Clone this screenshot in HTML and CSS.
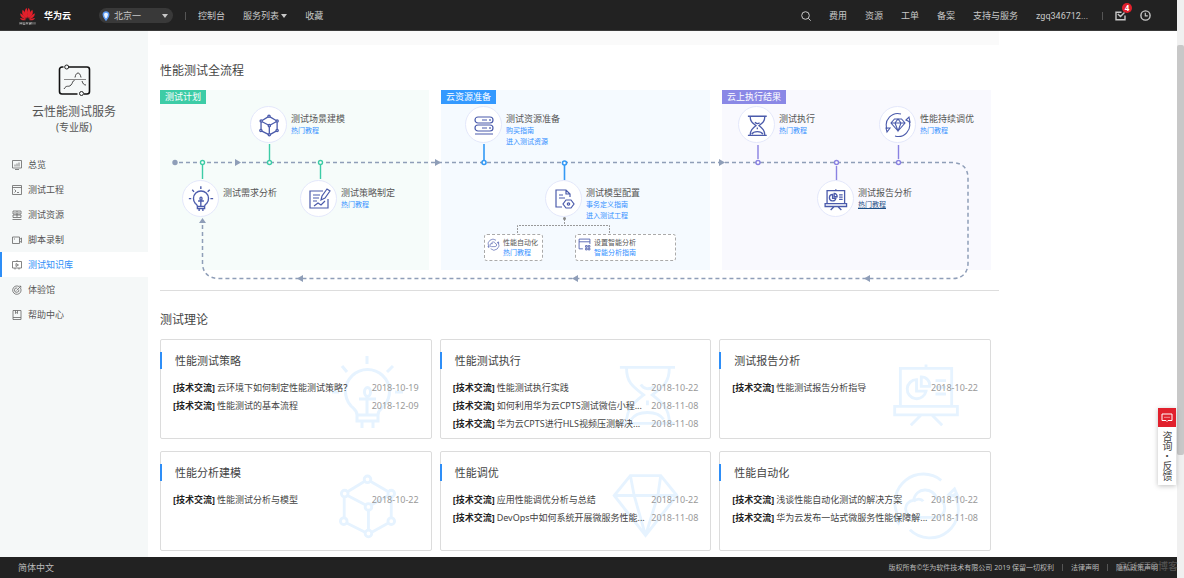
FILE: index.html
```html
<!DOCTYPE html>
<html lang="zh-CN">
<head>
<meta charset="utf-8">
<title>云性能测试服务</title>
<link rel="stylesheet" href="styles.css">
</head>
<body>
<svg class="defs" aria-hidden="true">
  <symbol id="i-bulb" viewBox="0 0 73 76">
    <path d="M36 1v8M11 11l5 6M62 11l-6 6M1 37h7M64 37h8M26 60c0-5-3-6-6-9a22 22 0 1 1 33 0c-3 3-6 4-6 9zM26 60h21v6H26zM31 67v6M42 67v6M36 42v18M28 44h17"/><ellipse cx="36.500" cy="37" rx="3" ry="4.500"/>
  </symbol>
  <symbol id="i-cube" viewBox="0 0 76 80">
    <path d="M35 15L17 26M41 15l19 11M17 30l19 10M60 30L42 40M13.500 32v21M63 32v21M39 46v20M16 59l20 10M60 59L42 69"/><circle cx="38" cy="13" r="3.500"/><circle cx="14" cy="28" r="3.500"/><circle cx="63" cy="28" r="3.500"/><circle cx="39" cy="42" r="3.500"/><circle cx="13" cy="57" r="3.500"/><circle cx="63" cy="57" r="3.500"/><circle cx="39" cy="70" r="3.500"/>
  </symbol>
  <symbol id="i-glass" viewBox="0 0 76 80">
    <path d="M10 13h58M10 72h58M17 14c0 16 8 20 18 28-10 8-18 14-18 29M62 14c0 16-8 20-18 28 10 8 18 14 18 29M32 31c3 5 9 6 14 2M22 68c6-10 28-10 34 0M39 48v5"/>
  </symbol>
  <symbol id="i-gem" viewBox="0 0 76 80">
    <path d="M21 9h32l17 21-33 42L4 30zM4 30h66M21 9l4 21 12 42M53 9l-3 21-13 42"/>
  </symbol>
  <symbol id="i-board" viewBox="0 0 73 80">
    <path d="M36 10v4M9 14h54v40H9zM3 54h66v9H3zM31 63L20 74M42 63l11 11M46 34h11M46 41h11M26 26a10 10 0 1 0 10 12H26zM31 23v10h9a9 9 0 0 0-9-10zM46 27h11"/>
  </symbol>
  <symbol id="i-cloud" viewBox="0 0 73 80">
    <path d="M52 14A30 30 0 0 0 6 50M19 66A30 30 0 0 0 65 28M60 29l6-6 4 9zM2 53l8-1-3 7zM24 53a9 9 0 0 1-1-18c2-14 21-14 24-2 11 0 12 20 0 20zM23 36c3-3 8-3 10 0"/>
  </symbol>
</svg>
<div class="window">
<div class="page">
  <header class="topbar">
    <a class="brand" href="#">
      <svg class="brand-mark" viewBox="0 0 18 19"><g fill="#e3202b"><path d="M8.600 12C5 8 5.500 3 8 1c1 2 1.500 7 .6 11zM9.400 12c3.600-4 3.100-9 .6-11-1 2-1.500 7-.6 11z"/><path d="M8 12.300C3.500 9.500 2.500 6 4 3c2.500 2 4 6 4 9.300zM10 12.300c4.500-2.800 5.500-6.300 4-9.300-2.500 2-4 6-4 9.300z"/><path d="M7.500 13C3.500 12 1 9.500 1.300 6.500 4.500 8 6.500 10.500 7.500 13zM10.500 13c4-1 6.500-3.500 6.200-6.500-3.200 1.500-5.200 4-6.200 6.500z"/><path d="M7.500 13.700c-3 1-5.500.2-6.500-2.200 2.500.2 5 1 6.500 2.200zM10.500 13.700c3 1 5.500.2 6.500-2.200-2.500.2-5 1-6.500 2.200z"/></g><path d="M1 16v2.500M3 16v2.500M1 17.200h2M4.500 16v2.500h1.700V16M7.500 18.500L8.400 16l1 2.500M10.500 16l.7 2.500.7-2.200.7 2.200.7-2.500M14.800 16v2.500M16.900 16v2.500" stroke="#ddd" stroke-width=".6" fill="none"/></svg>
      <span>华为云</span>
    </a>
    <label class="region">
      <svg viewBox="0 0 8 10"><path d="M4 1a2.700 2.700 0 0 0-2.700 2.800C1.300 6 4 9 4 9s2.700-3 2.700-5.200A2.700 2.700 0 0 0 4 1z" fill="#eaf3ff" stroke="#5b9bf5" stroke-width="1.500"/></svg>
      <select aria-label="区域"><option>北京一</option></select>
      <i class="caret"></i>
    </label>
    <i class="rule rule-left"></i>
    <nav class="menu"><a href="#">控制台</a><a href="#">服务列表 <i class="caret"></i></a><a href="#">收藏</a></nav>
    <nav class="menu menu-right">
      <button class="icon-btn" aria-label="搜索"><svg viewBox="0 0 10 10"><circle cx="4.500" cy="4.500" r="3.800"/><path d="M7.300 7.300l2.400 2.400"/></svg></button>
      <a href="#">费用</a><a href="#">资源</a><a href="#">工单</a><a href="#">备案</a><a href="#">支持与服务</a><a class="user" href="#">zgq346712...</a>
    </nav>
    <i class="rule"></i>
    <button class="icon-btn mail" aria-label="消息"><svg viewBox="0 0 11 10"><path d="M6.500 1.700H1v7.500h9V5M2.800 3.500L5.500 6l4-4" stroke-width="1.400"/></svg><b class="badge">4</b></button>
    <button class="icon-btn clock" aria-label="历史"><svg viewBox="0 0 11 11"><circle cx="5.500" cy="5.500" r="4.600" stroke-width="1.400"/><path d="M5.300 2.800v3h2.500" stroke-width="1.200"/></svg></button>
  </header>

  <div class="body">
    <aside class="side">
      <svg class="side-logo" viewBox="0 0 33 33"><path d="M5.500 3H4a2.500 2.500 0 0 0-2.500 2.500v22A2.500 2.500 0 0 0 4 30h15.500M10.500 3H29a2.500 2.500 0 0 1 2.500 2.500v22A2.500 2.500 0 0 1 29 30h-3" stroke="#111" stroke-width="1.600"/><circle cx="8.700" cy="3" r="2" stroke="#222"/><circle cx="23.500" cy="29.500" r="2" stroke="#222"/><path d="M6 15.500h22" stroke="#888"/><path d="M6 25c3-5 4-1 7-4 2-2 1-4 3.500-4.500M17 13.500c1-6 5-6 6 0M24 17c1 3 2 4 4 4" stroke="#444"/></svg>
      <h1>云性能测试服务</h1>
      <p class="edition">(专业版)</p>
      <nav class="side-nav">
        <a href="#"><svg viewBox="0 0 10 10"><path d="M.5.5h9v7.500h-9zM3 9.500h4M3 4.500v2M5 3.500v3M7 2.500v4"/></svg>总览</a>
        <a href="#"><svg viewBox="0 0 10 10"><path d="M.5.5h9v9h-9zM.5 2.500h9M2.500 4.500L4 6 2.500 7.500M5 7.500h2"/></svg>测试工程</a>
        <a href="#"><svg viewBox="0 0 10 10"><path d="M1 1h8v3H1zM1 5h8v2.500H1zM.5 9.500h9M5 1v6M2.500 2.500h1M6.500 2.500h1"/></svg>测试资源</a>
        <a href="#"><svg viewBox="0 0 10 10"><path d="M.5 2h7v6.500h-7zM7.500 4.500l2-1.500v4.500l-2-1.500M2 4h1"/></svg>脚本录制</a>
        <a href="#" class="active"><svg viewBox="0 0 10 10"><path d="M.5 1.500h9v6.500h-9zM5 0v1.500M3 8v1.500M7 8v1.500M4 3.500v3l2.500-1.500z"/></svg>测试知识库</a>
        <a href="#"><svg viewBox="0 0 10 10"><path d="M8.500 3A4.200 4.200 0 1 1 7 1.500M6.800 4.500a2.200 2.200 0 1 1-1.500-1.500M4.500 5.500l4.500-4.500M8 .5v1.500h1.500"/></svg>体验馆</a>
        <a href="#"><svg viewBox="0 0 10 10"><path d="M1 .5h8v9H1zM1 7.500h8M3.500.5v3l1-.8 1 .8v-3"/></svg>帮助中心</a>
      </nav>
    </aside>

    <main class="main">
      <div class="banner"></div>
      <h2>性能测试全流程</h2>
      <section class="flow">
        <div class="stages">
          <div class="stage stage-plan"><span>测试计划</span></div>
          <div class="stage stage-res"><span>云资源准备</span></div>
          <div class="stage stage-result"><span>云上执行结果</span></div>
        </div>
        <svg class="wires" viewBox="160 90 839 195">
          <g fill="none" stroke="#8f9eb8" stroke-width="1.500" stroke-dasharray="4 3"><path d="M179 162.500H953q15 1 15 16V264q-1 14-15 14.500H218q-15-1-15.500-15V223"/></g>
          <g fill="#8f9eb8"><circle cx="175" cy="162.500" r="2.700"/><path d="M235 159l6 3.500-6 3.500zM435 159l6 3.500-6 3.500zM719 159l6 3.500-6 3.500zM303 275l-6 3.500 6 3.500zM578 275l-6 3.500 6 3.500zM870 275l-6 3.500 6 3.500zM199 223l3.500-5 3.500 5z"/></g>
          <g fill="#fff" stroke="#3dcca6" stroke-width="1.400"><path d="M269.500 144v16M202.500 165v14M320.500 165v14"/><circle cx="269.500" cy="162.500" r="2"/><circle cx="202.500" cy="162.500" r="2"/><circle cx="320.500" cy="162.500" r="2"/></g>
          <g fill="#fff" stroke="#3399f5" stroke-width="1.600"><path d="M484 144v16M564.500 165v15"/><circle cx="484" cy="162.500" r="2"/><circle cx="564.500" cy="163" r="2"/></g>
          <g fill="#fff" stroke="#8a82e2" stroke-width="1.400"><path d="M758 145v14M898.500 145v14M836.500 166v14"/><circle cx="758" cy="162.500" r="2"/><circle cx="898.500" cy="162.500" r="2"/><circle cx="836.500" cy="162.500" r="2"/></g>
          <g fill="none" stroke="#999" stroke-dasharray="2 1"><path d="M564.500 219v6M517.500 233v-7.500h92v7.500"/></g><circle cx="564.500" cy="218.500" r="1.500" fill="#888"/>
        </svg>

        <div class="node n-model"><span class="disc"><svg><use href="#i-cube"/></svg></span><div><b>测试场景建模</b><a href="#">热门教程</a></div></div>
        <div class="node n-need"><span class="disc"><svg><use href="#i-bulb"/></svg></span><div><b>测试需求分析</b></div></div>
        <div class="node n-policy"><span class="disc"><svg viewBox="0 0 24 24"><path d="M16 4H3v17h18V12M6 8h7M6 11h6M6 14h4M7 19l4-3 3 2 4-4M14 13l1-4 5-7 3 2-5 7z"/></svg></span><div><b>测试策略制定</b><a href="#">热门教程</a></div></div>
        <div class="node n-prep"><span class="disc"><svg viewBox="0 0 24 24"><rect x="3" y="4" width="18" height="6" rx="3"/><rect x="3" y="12" width="18" height="6" rx="3"/><path d="M3 21h18M10 7h5M10 15h5M18 6v2M18 14v2"/></svg></span><div><b>测试资源准备</b><a href="#">购买指南</a><a href="#">进入测试资源</a></div></div>
        <div class="node n-config"><span class="disc"><svg viewBox="0 0 24 24"><path d="M10 20H4V3h10l4 4v3M14 3v4h4M7 8h4M7 11h6M14 13h5l3 4-3 4h-5l-3-4z"/><circle cx="16.500" cy="17" r="1.200"/></svg></span><div><b>测试模型配置</b><a href="#">事务定义指南</a><a href="#">进入测试工程</a></div></div>
        <div class="node n-run"><span class="disc"><svg><use href="#i-glass"/></svg></span><div><b>测试执行</b><a href="#">热门教程</a></div></div>
        <div class="node n-report"><span class="disc"><svg><use href="#i-board"/></svg></span><div><b>测试报告分析</b><a href="#" class="hover">热门教程</a></div></div>
        <div class="node n-tune"><span class="disc disc-wide"><svg viewBox="0 0 26 26"><path d="M16 2A11.500 11.500 0 0 0 2 17M10 24A11.500 11.500 0 0 0 24 9M21 8l3-3 1 5zM1 16l4 0-3 4zM9.500 7h7l3.500 4-7 8-7-8zM6 11h14M10 11l3 8 3-8M10 11l3-4 3 4"/></svg></span><div><b>性能持续调优</b><a href="#">热门教程</a></div></div>
        <div class="sub s-auto"><svg><use href="#i-cloud"/></svg><div><b>性能自动化</b><a href="#">热门教程</a></div></div>
        <div class="sub s-smart"><svg viewBox="0 0 24 24"><path d="M9 20H2V2h20v9M2 7h20M14 14h3v3h-3zM19 14h3v3h-3zM14 19h3v3h-3zM19 19h3v3h-3z"/></svg><div><b>设置智能分析</b><a href="#">智能分析指南</a></div></div>
      </section>

      <h2 class="theory-title">测试理论</h2>
      <section class="cards">
        <article class="card"><svg class="mark"><use href="#i-bulb"/></svg><h3>性能测试策略</h3>
          <ul><li><b>[技术交流]</b><a href="#">云环境下如何制定性能测试策略？</a><time>2018-10-19</time></li>
          <li><b>[技术交流]</b><a href="#">性能测试的基本流程</a><time>2018-12-09</time></li></ul></article>
        <article class="card"><svg class="mark"><use href="#i-glass"/></svg><h3>性能测试执行</h3>
          <ul><li><b>[技术交流]</b><a href="#">性能测试执行实践</a><time>2018-10-22</time></li>
          <li><b>[技术交流]</b><a href="#">如何利用华为云CPTS测试微信小程...</a><time>2018-11-08</time></li>
          <li><b>[技术交流]</b><a href="#">华为云CPTS进行HLS视频压测解决...</a><time>2018-11-08</time></li></ul></article>
        <article class="card"><svg class="mark"><use href="#i-board"/></svg><h3>测试报告分析</h3>
          <ul><li><b>[技术交流]</b><a href="#">性能测试报告分析指导</a><time>2018-10-22</time></li></ul></article>
        <article class="card"><svg class="mark"><use href="#i-cube"/></svg><h3>性能分析建模</h3>
          <ul><li><b>[技术交流]</b><a href="#">性能测试分析与模型</a><time>2018-10-22</time></li></ul></article>
        <article class="card"><svg class="mark"><use href="#i-gem"/></svg><h3>性能调优</h3>
          <ul><li><b>[技术交流]</b><a href="#">应用性能调优分析与总结</a><time>2018-10-22</time></li>
          <li><b>[技术交流]</b><a href="#">DevOps中如何系统开展微服务性能...</a><time>2018-11-08</time></li></ul></article>
        <article class="card"><svg class="mark"><use href="#i-cloud"/></svg><h3>性能自动化</h3>
          <ul><li><b>[技术交流]</b><a href="#">浅谈性能自动化测试的解决方案</a><time>2018-10-22</time></li>
          <li><b>[技术交流]</b><a href="#">华为云发布一站式微服务性能保障解...</a><time>2018-11-08</time></li></ul></article>
      </section>
    </main>
  </div>

  <footer class="footer">
    <a class="lang" href="#">简体中文</a>
    <span class="legal"><span>版权所有©华为软件技术有限公司 2019 保留一切权利</span><i></i><a href="#">法律声明</a><i></i><a href="#">隐私政策声明</a></span>
  </footer>
</div>
<div class="scroll"><div class="thumb"></div></div>
<span class="stamp">@51CTO博客</span>
<a class="feedback" href="#"><span class="feedback-icon"><svg viewBox="0 0 12 10"><path d="M1 1h10v6.500H7l-1 1-1-1H1zM3.500 4.300h1M5.500 4.300h1M7.500 4.300h1"/></svg></span><span class="feedback-text">咨询·反馈</span></a>
</div>
</body>
</html>
```
FILE: styles.css
```css
* { box-sizing: border-box; }
body, h1, h2, h3, p, ul { margin: 0; padding: 0; font-weight: 400; }
body { font: 9px/12px "Noto Sans", "Noto Sans CJK SC", sans-serif; color: #444; background: #fff; }
a { color: inherit; text-decoration: none; }
ul { list-style: none; }
svg { display: block; fill: none; }
button, select { font: inherit; color: inherit; background: none; border: 0; padding: 0; }
.defs { position: absolute; width: 0; height: 0; }

.window { display: flex; position: relative; min-height: 100vh; }
.page { flex: 1; min-width: 0; display: flex; flex-direction: column; }
.scroll { width: 7px; background: #f0f0f0; padding-top: 45px; }
.thumb { height: 410px; background: #c8c8c8; border-radius: 2px; }

.topbar { display: flex; align-items: center; height: 31px; padding: 1px 26px 0 19px; background: #222; color: #c8c8c8; white-space: nowrap; border-bottom: 1px solid #3a3a3a; }
.brand { display: flex; align-items: center; gap: 8px; color: #fff; font-weight: 700; width: 80px; }
.brand-mark { width: 17px; height: 18px; }
.region { display: flex; align-items: center; gap: 4px; width: 74px; height: 15px; padding: 0 5px 0 3px; border-radius: 8px; background: #393939; }
.region svg { width: 8px; height: 10px; }
.region select { appearance: none; flex: 1; min-width: 0; height: 13px; outline: 0; }
.caret { display: inline-block; border: 3px solid transparent; border-top: 4px solid #c8c8c8; border-bottom: 0; vertical-align: middle; }
.rule { width: 1px; height: 8px; background: #555; }
.rule-left { margin: 0 12px; }
.menu { display: flex; align-items: center; gap: 18px; }
.menu-right { margin: 0 14px 0 auto; }
.user { font-family: Roboto, sans-serif; }
.icon-btn { position: relative; }
.icon-btn svg { width: 10px; height: 10px; stroke: #c8c8c8; }
.mail { margin-left: 12px; }
.mail svg, .clock svg { width: 11px; height: 11px; }
.clock { margin-left: 14px; }
.badge { position: absolute; left: 7px; top: -7px; width: 10px; height: 10px; border-radius: 5px; background: #e1202c; color: #fff; font-size: 8px; line-height: 10px; text-align: center; }

.body { flex: 1; display: flex; }
.side { width: 148px; flex: none; background: #f5f8f8; padding-top: 33px; text-align: center; color: #555; }
.side-logo { width: 33px; height: 33px; margin: 0 auto 7px; }
.side h1 { font-size: 12px; line-height: 16px; }
.edition { font-size: 10px; line-height: 14px; }
.side-nav { margin-top: 18px; }
.side-nav a { display: flex; align-items: center; gap: 6px; height: 25px; padding-left: 10px; border-left: 2px solid transparent; }
.side-nav svg { width: 10px; height: 10px; stroke: #666; stroke-width: .8; }
.side-nav .active { background: #fff; border-color: #2e8ef7; color: #2e8ef7; }

.main { flex: 1; min-width: 0; max-width: 863px; padding: 0 12px 6px; }
.banner { height: 14px; background: #fafafa; }
.main h2 { font-size: 12px; line-height: 20px; margin: 16px 0 9px; }
.main .theory-title { margin-top: 19px; }

.flow { position: relative; height: 201px; border-bottom: 1px solid #ddd; }
.stages { display: grid; grid-template-columns: repeat(3, 269px); gap: 12px; }
.stage { height: 180px; }
.stage span { display: inline-block; height: 14px; line-height: 14px; padding: 0 5px; color: #fff; vertical-align: top; }
.stage-plan { background: #f6fcfa; }
.stage-plan span { background: #3dcca6; }
.stage-res { background: #f5faff; }
.stage-res span { background: #3399ff; }
.stage-result { background: #f9f9fe; }
.stage-result span { background: #8a88e6; }
.wires { position: absolute; left: 0; top: 0; width: 839px; height: 195px; }
.node { position: absolute; display: flex; gap: 4px; white-space: nowrap; }
.node > div { padding-top: 7px; }
.node b, .sub b { display: block; font-weight: 400; color: #555; }
.node a, .sub a { display: block; width: max-content; font-size: 7px; line-height: 11px; color: #3390ff; }
.node .hover { color: #1d4f86; text-decoration: underline; }
.disc { width: 37px; height: 37px; border: 1px solid #e4e8fb; border-radius: 50%; background: #fff; display: grid; place-items: center; }
.disc svg { width: 24px; height: 24px; stroke: #4b5bab; stroke-width: 1.2; }
.disc svg:has(use) { width: 26px; height: 26px; stroke-width: 4; }
.disc-wide svg { width: 26px; height: 26px; stroke-width: 1.1; }
.n-model { left: 90px; top: 16px; }
.n-need { left: 22px; top: 90px; }
.n-policy { left: 140px; top: 90px; }
.n-prep { left: 305px; top: 16px; }
.n-config { left: 385px; top: 90px; }
.n-run { left: 578px; top: 16px; }
.n-report { left: 657px; top: 90px; }
.n-tune { left: 719px; top: 16px; }
.sub { position: absolute; top: 144px; height: 27px; display: flex; gap: 3px; padding: 3px 2px; border: 1px dashed #aaa; border-radius: 3px; background: #fff; white-space: nowrap; }
.sub b { font-size: 7px; line-height: 10px; }
.sub a { line-height: 10px; }
.sub svg { width: 13px; height: 13px; stroke: #4b5bab; stroke-width: 1.6; }
.sub svg:has(use) { stroke-width: 4; }
.s-auto { left: 324px; width: 59px; }
.s-smart { left: 415px; width: 101px; }

.cards { display: grid; grid-template-columns: repeat(3, 1fr); gap: 12px 8px; margin-right: 8px; }
.card { position: relative; height: 100px; padding-top: 12px; border: 1px solid #dcdcdc; border-radius: 2px; }
.card h3 { position: relative; margin: 0 0 10px -1px; padding-left: 13px; border-left: 2px solid #2e8ef7; font-size: 11px; line-height: 17px; }
.card ul { position: relative; padding: 0 12px; }
.card li { display: flex; gap: 2px; line-height: 18px; white-space: nowrap; }
.card b { font-weight: 700; color: #222; }
.card time { margin-left: auto; color: #999; }
.mark { position: absolute; right: 27px; top: 15px; width: 73px; height: 76px; stroke: #e6f3ff; stroke-width: 3; }

.footer { height: 21px; padding: 0 19px 0 18px; display: flex; align-items: center; justify-content: space-between; background: #222; color: #bbb; white-space: nowrap; }
.legal { display: flex; align-items: center; font-size: 7px; }
.legal i { width: 1px; height: 7px; margin: 0 8px; background: #555; }
.stamp { position: absolute; right: 6px; bottom: 6px; font-size: 10px; color: rgba(140, 140, 140, .5); }

.feedback { position: absolute; right: 8px; top: 408px; width: 18px; background: #fff; box-shadow: 0 1px 5px rgba(0, 0, 0, .25); }
.feedback-icon { display: grid; place-items: center; height: 19px; background: #e1202c; }
.feedback-icon svg { width: 12px; height: 10px; stroke: #fff; }
.feedback-text { display: block; padding: 4px 0; font-size: 10px; line-height: 18px; writing-mode: vertical-rl; font-family: "Noto Sans CJK SC", sans-serif; }
```
